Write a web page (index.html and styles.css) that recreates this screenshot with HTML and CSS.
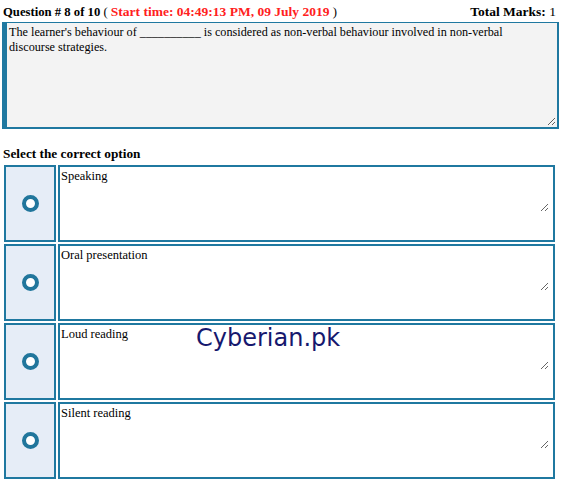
FILE: index.html
```html
<!DOCTYPE html>
<html>
<head>
<meta charset="utf-8">
<link rel="stylesheet" href="styles.css">
</head>
<body>
<div class="page">
  <div class="header">
    <div class="qnum">Question # 8 of 10 <span class="paren">(</span> <span class="time">Start time: 04:49:13 PM, 09 July 2019</span> <span class="paren">)</span></div>
    <div class="marks">Total Marks: <span class="paren">1</span></div>
  </div>
  <div class="qbox">
    <textarea class="qtext" readonly>The learner's behaviour of __________ is considered as non-verbal behaviour involved in non-verbal discourse strategies.</textarea>
  </div>
  <div class="select">Select the correct option</div>
  <div class="options">
    <div class="opt">
      <div class="radio-cell"><span class="radio"></span></div>
      <div class="text-cell"><textarea class="otext" readonly>Speaking</textarea></div>
    </div>
    <div class="opt">
      <div class="radio-cell"><span class="radio"></span></div>
      <div class="text-cell"><textarea class="otext" readonly>Oral presentation</textarea></div>
    </div>
    <div class="opt">
      <div class="radio-cell"><span class="radio"></span></div>
      <div class="text-cell"><textarea class="otext" readonly>Loud reading</textarea></div>
    </div>
    <div class="opt">
      <div class="radio-cell"><span class="radio"></span></div>
      <div class="text-cell"><textarea class="otext" readonly>Silent reading</textarea></div>
    </div>
  </div>
  <div class="watermark">Cyberian.pk</div>
</div>
</body>
</html>
```

FILE: styles.css
```css
html, body {
  margin: 0;
  padding: 0;
  background: #ffffff;
}
.page {
  position: relative;
  width: 565px;
  height: 483px;
  font-family: "Liberation Serif", "Times New Roman", serif;
  color: #000;
}
.header {
  display: flex;
  justify-content: space-between;
  align-items: baseline;
  padding: 4px 9px 0 3px;
  height: 18px;
  font-size: 12.7px;
  font-weight: bold;
}
.marks {
  font-size: 13.5px;
}
.paren {
  font-weight: normal;
}
.time {
  color: #ff2020;
  font-size: 13.5px;
}
.qbox {
  margin: 0 6px 0 2px;
  border: 2px solid #1f78a0;
  border-left-width: 5px;
  border-top-width: 1px;
  background: #f3f3f3;
  height: 104px;
  display: flex;
}
.qtext {
  flex: 1;
  margin: 0 1px 1px 0;
  border: none;
  background: #f3f3f3;
  font-family: "Liberation Serif", "Times New Roman", serif;
  font-size: 12.2px;
  line-height: 15px;
  padding: 2px 40px 2px 2px;
  resize: vertical;
  outline: none;
  overflow: hidden;
}
.select {
  padding: 17px 0 0 3px;
  height: 19px;
  font-size: 13.3px;
  font-weight: bold;
}
.options {
  display: flex;
  flex-direction: column;
  gap: 2px;
  margin: 0 10px 0 4px;
}
.opt {
  display: flex;
  gap: 2px;
  height: 77px;
}
.radio-cell {
  width: 48px;
  background: #e6edf7;
  border: 2px solid #1f78a0;
  display: flex;
  align-items: center;
  justify-content: center;
}
.radio {
  width: 9px;
  height: 9px;
  border: 4px solid #21769c;
  border-radius: 50%;
  background: #fff;
}
.text-cell {
  flex: 1;
  border: 2px solid #1f78a0;
  display: flex;
  align-items: flex-start;
}
.otext {
  flex: 1;
  height: 41px;
  margin: 0 4px 0 0;
  border: none;
  padding: 2px 1px;
  font-family: "Liberation Serif", "Times New Roman", serif;
  font-size: 12.5px;
  line-height: 15px;
  resize: vertical;
  outline: none;
  overflow: hidden;
  background: #fff;
}
.watermark {
  position: absolute;
  left: 196px;
  top: 324px;
  font-family: "DejaVu Sans", Verdana, sans-serif;
  font-size: 24px;
  color: #16186e;
}
```
